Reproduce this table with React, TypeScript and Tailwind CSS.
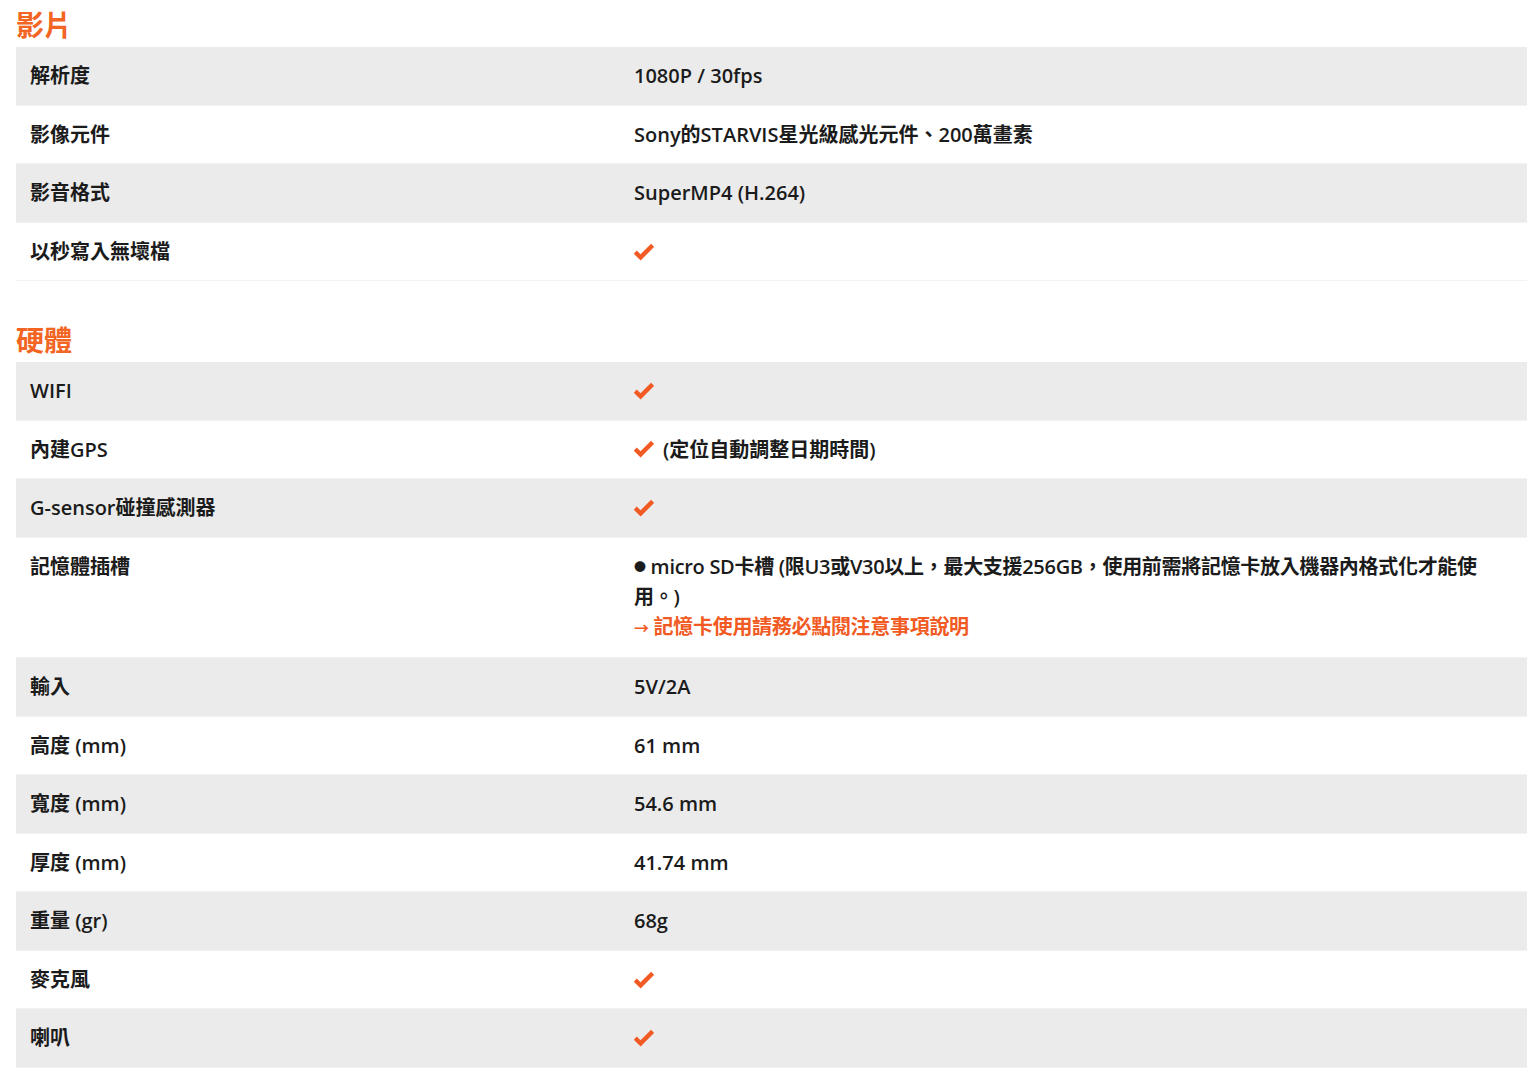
import React from "react";

type Row = { label: string; value: React.ReactNode };

function Check() {
  return (
    <svg width="20" height="18" viewBox="0 0 20 18" className="inline-block align-[-2px]">
      <path d="M1.2 9.2 L6.6 14.4 L18.6 2.4" fill="none" stroke="#f15a22" strokeWidth="4.4" strokeLinecap="butt" strokeLinejoin="miter" />
    </svg>
  );
}

const videoRows: Row[] = [
  { label: "解析度", value: "1080P / 30fps" },
  { label: "影像元件", value: "Sony的STARVIS星光級感光元件、200萬畫素" },
  { label: "影音格式", value: "SuperMP4 (H.264)" },
  { label: "以秒寫入無壞檔", value: <Check /> },
];

const hardwareRows: Row[] = [
  { label: "WIFI", value: <Check /> },
  {
    label: "內建GPS",
    value: (
      <span className="flex items-center gap-[9px]">
        <Check />
        (定位自動調整日期時間)
      </span>
    ),
  },
  { label: "G-sensor碰撞感測器", value: <Check /> },
  {
    label: "記憶體插槽",
    value: (
      <div className="tracking-[-0.3px]">
        <div className="whitespace-nowrap">
          <span className="align-[2px] text-[12px]">●</span> micro SD卡槽 (限U3或V30以上，最大支援256GB，使用前需將記憶卡放入機器內格式化才能使
        </div>
        <div>用。)</div>
        <a href="#" className="block text-[#f15a22]">
          <span className="text-[15px]">→</span> 記憶卡使用請務必點閱注意事項說明
        </a>
      </div>
    ),
  },
  { label: "輸入", value: "5V/2A" },
  { label: "高度 (mm)", value: "61 mm" },
  { label: "寬度 (mm)", value: "54.6 mm" },
  { label: "厚度 (mm)", value: "41.74 mm" },
  { label: "重量 (gr)", value: "68g" },
  { label: "麥克風", value: <Check /> },
  { label: "喇叭", value: <Check /> },
];

function SpecTable({ rows }: { rows: Row[] }) {
  return (
    <div className="flex flex-col">
      {rows.map((row, i) => (
        <div
          key={row.label}
          className={
            "grid grid-cols-[604px_1fr] border-b border-[#f2f2f2] " +
            (i % 2 === 0 ? "bg-[#ebebeb]" : "bg-white")
          }
        >
          <div className="px-[14px] py-[14px] leading-[29.5px]">{row.label}</div>
          <div className="px-[14px] py-[14px] leading-[29.5px]">{row.value}</div>
        </div>
      ))}
    </div>
  );
}

export default function App() {
  return (
    <div
      className="min-h-screen bg-white pl-[16px] pr-[12px] text-[20px] font-semibold text-[#1b1b1b]"
      style={{ fontFamily: '"Open Sans", "Noto Sans CJK TC", sans-serif' }}
    >
      <h2 className="h-[47px] pt-[4px] text-[28px] font-bold leading-[43px] text-[#f26522]">影片</h2>
      <SpecTable rows={videoRows} />
      <h2 className="mt-[34px] h-[47px] pt-[4px] text-[28px] font-bold leading-[43px] text-[#f26522]">硬體</h2>
      <SpecTable rows={hardwareRows} />
    </div>
  );
}
